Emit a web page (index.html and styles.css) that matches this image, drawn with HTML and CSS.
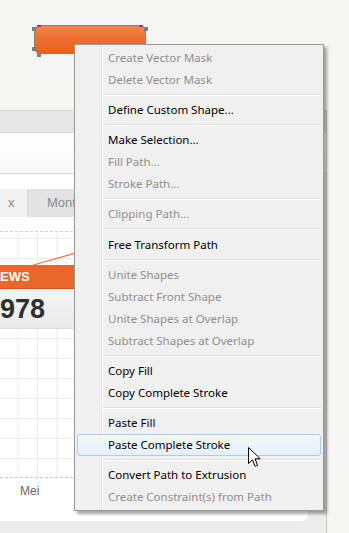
FILE: index.html
```html
<!DOCTYPE html>
<html>
<head>
    <title>Path context menu</title>
    <meta charset="utf-8">
    <link rel="stylesheet" href="styles.css">
</head>
<body>
    <div class="shape-area">
        <div class="shape">
            <span class="handle h-tl"></span>
            <span class="anchor a-tl"></span>
            <span class="handle h-tr"></span>
            <span class="anchor a-tr"></span>
            <span class="handle h-bl"></span>
            <span class="handle h-bl2"></span>
        </div>
    </div>

    <div class="panel">
        <div class="panel-head"></div>
        <div class="panel-box"></div>
        <div class="card">
            <div class="tabs">
                <div class="tab tab-first">x</div>
                <div class="tab">Month</div>
            </div>
            <div class="chart">
                <svg class="chart-line" width="300" height="246" viewBox="0 0 300 246">
                    <polyline points="0,43 30,34 150,0" fill="none" stroke="#f0773a" stroke-width="1.3"/>
                </svg>
                <div class="stat">
                    <div class="stat-title">EWS</div>
                    <div class="stat-value">978</div>
                </div>
            </div>
            <div class="axis">Mei</div>
        </div>
    </div>

    <ul class="menu">
        <li class="off">Create Vector Mask</li>
        <li class="off">Delete Vector Mask</li>
        <li class="sep"></li>
        <li>Define Custom Shape...</li>
        <li class="sep"></li>
        <li>Make Selection...</li>
        <li class="off">Fill Path...</li>
        <li class="off">Stroke Path...</li>
        <li class="sep"></li>
        <li class="off">Clipping Path...</li>
        <li class="sep"></li>
        <li>Free Transform Path</li>
        <li class="sep"></li>
        <li class="off">Unite Shapes</li>
        <li class="off">Subtract Front Shape</li>
        <li class="off">Unite Shapes at Overlap</li>
        <li class="off">Subtract Shapes at Overlap</li>
        <li class="sep"></li>
        <li>Copy Fill</li>
        <li>Copy Complete Stroke</li>
        <li class="sep"></li>
        <li>Paste Fill</li>
        <li class="hover">Paste Complete Stroke</li>
        <li class="sep"></li>
        <li>Convert Path to Extrusion</li>
        <li class="off">Create Constraint(s) from Path</li>
    </ul>

    <svg class="cursor" width="14" height="21" viewBox="0 0 14 21">
        <path d="M0.5 0.5 L0.5 16.5 L4.5 12.8 L7.2 19.3 L9.6 18.3 L7 11.8 L12.2 11.8 Z" fill="#fff" stroke="#000" stroke-width="1" stroke-linejoin="miter"/>
    </svg>
</body>
</html>
```

FILE: styles.css
```css
html, body {
    margin: 0;
    padding: 0;
}
body {
    width: 349px;
    height: 533px;
    overflow: hidden;
    position: relative;
    background: #f5f5f4;
    font-family: "Liberation Sans", Arial, sans-serif;
}

/* shape being edited */
.shape-area {
    height: 110px;
    padding-top: 25px;
    box-sizing: border-box;
}
.shape {
    position: relative;
    margin-left: 34px;
    width: 110px;
    height: 27px;
    border: 1px solid #8a7d76;
    border-radius: 6px;
    background: linear-gradient(#f6844a, #ec6a2c 60%, #e6621f);
}
.handle {
    position: absolute;
    width: 4px;
    height: 4px;
    background: #7d7d7d;
}
.h-tl { left: -3px; top: 1px; }
.h-tr { right: -3px; top: 1px; }
.h-bl { left: -3px; bottom: 2px; }
.h-bl2 { left: 2px; bottom: -4px; }
.anchor {
    position: absolute;
    width: 4px;
    height: 2px;
    background: #9a2fc8;
}
.a-tl { left: 2px; top: -1px; }
.a-tr { right: 2px; top: -1px; }

/* dashboard window behind the menu */
.panel {
    width: 326px;
    height: 423px;
    border-top: 1px solid #d9d9d9;
    border-right: 1px solid #c4c4c4;
    background: #ededed;
}
.panel-head {
    height: 21px;
    background: #e6e6e6;
    border-bottom: 1px solid #dadada;
}
.panel-box {
    height: 40px;
    background: linear-gradient(#ffffff, #f8f8f8);
    border-bottom: 1px solid #d3d3d3;
}
.card {
    width: 308px;
    height: 347px;
    box-sizing: border-box;
    padding-top: 15px;
    background: #fff;
    border-radius: 0 0 6px 0;
}
.tabs {
    display: flex;
    height: 28px;
}
.tab {
    width: 60px;
    line-height: 28px;
    font-size: 13px;
    color: #8a8a8a;
    padding-left: 19px;
    background: #e3e3e3;
}
.tab-first {
    width: 19px;
    padding-left: 8px;
    background: #f2f2f2;
    border-right: 1px solid #d6d6d6;
}
.chart {
    position: relative;
    margin-top: 14px;
    height: 245px;
    border-top: 1px dashed #d2d2d2;
    border-bottom: 1px dashed #c8c8c8;
    background-image:
        linear-gradient(90deg, #ececec 1px, transparent 1px),
        linear-gradient(#ececec 1px, transparent 1px);
    background-size: 19.5px 20px;
    background-position: -2px 6px;
}
.chart-line {
    position: absolute;
    left: 0;
    top: 0;
}
.stat {
    position: relative;
    width: 110px;
    padding-top: 33px;
}
.stat-title {
    height: 23px;
    line-height: 23px;
    background: #e9672b;
    color: #fff;
    font-weight: bold;
    font-size: 13px;
    border-bottom: 1px solid #c9561f;
}
.stat-value {
    height: 39px;
    line-height: 40px;
    background: linear-gradient(#f4f4f4, #ebebeb);
    color: #2f2f2f;
    font-weight: bold;
    font-size: 27px;
    border-bottom: 1px solid #dcdcdc;
}
.axis {
    padding: 6px 0 0 20px;
    font-size: 12px;
    color: #666;
}

/* context menu */
.menu {
    position: absolute;
    left: 74px;
    top: 44px;
    width: 248px;
    margin: 0;
    padding: 2px 0 2px;
    list-style: none;
    border: 1px solid #979797;
    background: #f0f0f0 linear-gradient(90deg, transparent 26px, #e2e3e3 26px, #e2e3e3 27px, #fff 27px, #fff 28px, transparent 28px);
    box-shadow: 3px 3px 3px rgba(0, 0, 0, 0.35);
    font-family: "Noto Sans", sans-serif;
    font-size: 11.5px;
    color: #000;
}
.menu li {
    height: 20px;
    line-height: 20px;
    margin: 0 2px;
    padding-left: 30px;
    border: 1px solid transparent;
    border-radius: 3px;
    white-space: nowrap;
}
.menu li.off {
    color: #8e8e8e;
}
.menu li.hover {
    border-color: #a9cdf1;
    background: linear-gradient(#f3f8fd, #e6effa);
}
.menu li.sep {
    height: 0;
    margin: 3px 2px 3.125px 28px;
    padding: 0;
    border: 0;
    border-top: 1px solid #e0e0e0;
    border-bottom: 1px solid #fff;
    border-radius: 0;
}

.cursor {
    position: absolute;
    left: 248px;
    top: 447px;
}
```
